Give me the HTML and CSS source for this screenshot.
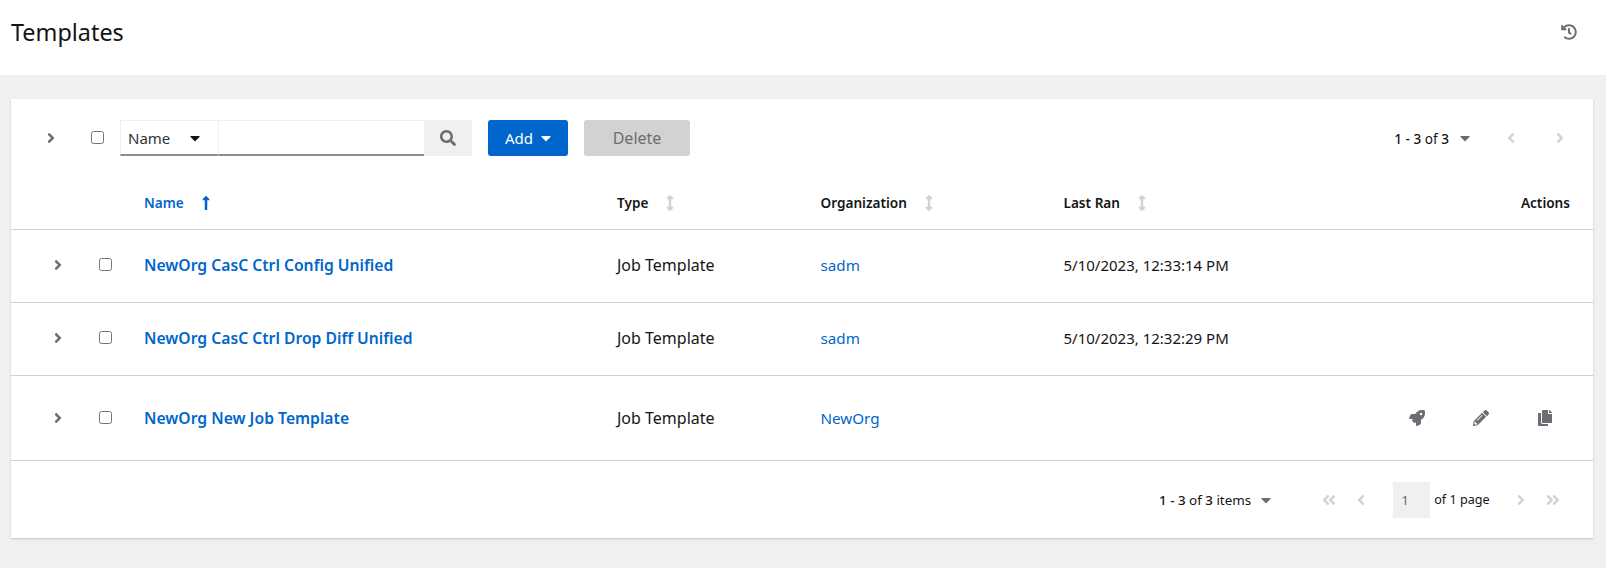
FILE: index.html
```html
<!DOCTYPE html>
<html lang="en">
<head>
  <meta charset="UTF-8" />
  <title>Templates</title>
  <link rel="stylesheet" href="styles.css">
</head>
<body>
  <svg class="sprites" xmlns="http://www.w3.org/2000/svg">
    <symbol id="i-right" viewBox="0 0 256 512"><path d="M224.3 273l-136 136c-9.4 9.4-24.6 9.4-33.9 0l-22.6-22.6c-9.4-9.4-9.4-24.6 0-33.9l96.4-96.4-96.4-96.4c-9.4-9.4-9.4-24.6 0-33.9L54.3 103c9.4-9.4 24.6-9.4 33.9 0l136 136c9.5 9.4 9.5 24.6.1 34z"/></symbol>
    <symbol id="i-left" viewBox="0 0 256 512"><path d="M31.7 239l136-136c9.4-9.4 24.6-9.4 33.9 0l22.6 22.6c9.4 9.4 9.4 24.6 0 33.9L127.9 256l96.4 96.4c9.4 9.4 9.4 24.6 0 33.9L201.7 409c-9.4 9.4-24.6 9.4-33.9 0l-136-136c-9.5-9.4-9.5-24.6-.1-34z"/></symbol>
    <symbol id="i-first" viewBox="0 0 448 512"><path d="M223.7 239l136-136c9.4-9.4 24.6-9.4 33.9 0l22.6 22.6c9.4 9.4 9.4 24.6 0 33.9L319.9 256l96.4 96.4c9.4 9.4 9.4 24.6 0 33.9L393.7 409c-9.4 9.4-24.6 9.4-33.9 0l-136-136c-9.5-9.4-9.5-24.6-.1-34zm-192 34l136 136c9.4 9.4 24.6 9.4 33.9 0l22.6-22.6c9.4-9.4 9.4-24.6 0-33.9L127.9 256l96.4-96.4c9.4-9.4 9.4-24.6 0-33.9L201.7 103c-9.4-9.4-24.6-9.4-33.9 0l-136 136c-9.5 9.4-9.5 24.6-.1 34z"/></symbol>
    <symbol id="i-last" viewBox="0 0 448 512"><path d="M224.3 273l-136 136c-9.4 9.4-24.6 9.4-33.9 0l-22.6-22.6c-9.4-9.4-9.4-24.6 0-33.9l96.4-96.4-96.4-96.4c-9.4-9.4-9.4-24.6 0-33.9L54.3 103c9.4-9.4 24.6-9.4 33.9 0l136 136c9.5 9.4 9.5 24.6.1 34zm192-34l-136-136c-9.4-9.4-24.6-9.4-33.9 0l-22.6 22.6c-9.4 9.4-9.4 24.6 0 33.9l96.4 96.4-96.4 96.4c-9.4 9.4-9.4 24.6 0 33.9l22.6 22.6c9.4 9.4 24.6 9.4 33.9 0l136-136c9.4-9.2 9.4-24.4 0-33.8z"/></symbol>
    <symbol id="i-caret" viewBox="0 0 320 512"><path d="M31.3 192h257.3c17.8 0 26.7 21.5 14.1 34.1L174.1 354.8c-7.8 7.8-20.5 7.8-28.3 0L17.2 226.1C4.6 213.5 13.5 192 31.3 192z"/></symbol>
    <symbol id="i-sort" viewBox="0 0 256 512"><path d="M214.059 377.941H168V134.059h46.059c21.382 0 32.09-25.851 16.971-40.971L144.971 7.029c-9.373-9.373-24.569-9.373-33.941 0L24.971 93.088c-15.119 15.119-4.411 40.971 16.971 40.971H88v243.882H41.941c-21.382 0-32.09 25.851-16.971 40.971l86.059 86.059c9.373 9.373 24.569 9.373 33.941 0l86.059-86.059c15.12-15.119 4.412-40.971-16.97-40.971z"/></symbol>
    <symbol id="i-up" viewBox="0 0 256 512"><path d="M88 166.059V468c0 6.627 5.373 12 12 12h56c6.627 0 12-5.373 12-12V166.059h46.059c21.382 0 32.09-25.851 16.971-40.971l-86.059-86.059c-9.373-9.373-24.569-9.373-33.941 0l-86.059 86.059c-15.119 15.119-4.411 40.971 16.971 40.971H88z"/></symbol>
  </svg>

  <header class="page-header">
    <h1>Templates</h1>
    <svg class="history-icon" viewBox="0 0 512 512"><path d="M504 255.531c.253 136.64-111.18 248.372-247.82 248.468-59.015.042-113.223-20.53-155.822-54.911-11.077-8.94-11.905-25.541-1.839-35.607l11.267-11.267c8.609-8.609 22.353-9.551 31.891-1.984C173.062 425.135 212.781 440 256 440c101.705 0 184-82.311 184-184 0-101.705-82.311-184-184-184-48.814 0-93.149 18.969-126.068 49.932l50.754 50.754c10.08 10.08 2.941 27.314-11.313 27.314H24c-8.837 0-16-7.163-16-16V38.627c0-14.254 17.234-21.393 27.314-11.314l49.372 49.372C129.209 34.136 189.552 8 256 8c136.81 0 247.747 110.78 248 247.531zm-180.912 78.784l9.823-12.63c8.138-10.463 6.253-25.542-4.21-33.679L288 256.349V152c0-13.255-10.745-24-24-24h-16c-13.255 0-24 10.745-24 24v135.651l65.409 50.874c10.463 8.137 25.541 6.253 33.679-4.21z"/></svg>
  </header>

  <main class="card">
    <div class="toolbar">
      <svg class="chevron toolbar-chevron"><use href="#i-right"/></svg>
      <span class="check toolbar-check"></span>
      <div class="filter">
        <div class="filter-select">Name<svg class="caret dark"><use href="#i-caret"/></svg></div>
        <div class="filter-input"></div>
        <div class="filter-btn"><svg viewBox="0 0 512 512"><path d="M505 442.7L405.3 343c-4.5-4.5-10.6-7-17-7H372c27.6-35.3 44-79.7 44-128C416 93.1 322.9 0 208 0S0 93.1 0 208s93.1 208 208 208c48.3 0 92.7-16.4 128-44v16.3c0 6.4 2.5 12.5 7 17l99.7 99.7c9.4 9.4 24.6 9.4 33.9 0l28.3-28.3c9.4-9.4 9.4-24.6.1-34zM208 336c-70.7 0-128-57.2-128-128 0-70.7 57.2-128 128-128 70.7 0 128 57.2 128 128 0 70.7-57.2 128-128 128z"/></svg></div>
      </div>
      <button class="btn btn-add">Add<svg class="caret white"><use href="#i-caret"/></svg></button>
      <button class="btn btn-delete">Delete</button>
      <div class="top-pager">
        <span class="count"><b>1 - 3</b> of <b>3</b></span>
        <svg class="caret grey"><use href="#i-caret"/></svg>
        <svg class="chevron off pager-prev"><use href="#i-left"/></svg>
        <svg class="chevron off pager-next"><use href="#i-right"/></svg>
      </div>
    </div>

    <table class="list">
      <thead>
        <tr>
          <th class="col-expand"></th>
          <th class="col-check"></th>
          <th class="col-name sorted">Name<svg class="sort-icon up"><use href="#i-up"/></svg></th>
          <th class="col-type">Type<svg class="sort-icon"><use href="#i-sort"/></svg></th>
          <th class="col-org">Organization<svg class="sort-icon"><use href="#i-sort"/></svg></th>
          <th class="col-ran">Last Ran<svg class="sort-icon"><use href="#i-sort"/></svg></th>
          <th class="col-actions">Actions</th>
        </tr>
      </thead>
      <tbody>
        <tr>
          <td class="col-expand"><svg class="chevron"><use href="#i-right"/></svg></td>
          <td class="col-check"><span class="check"></span></td>
          <td><a class="name-link">NewOrg CasC Ctrl Config Unified</a></td>
          <td>Job Template</td>
          <td><a class="org-link">sadm</a></td>
          <td class="ran">5/10/2023, 12:33:14 PM</td>
          <td></td>
        </tr>
        <tr>
          <td class="col-expand"><svg class="chevron"><use href="#i-right"/></svg></td>
          <td class="col-check"><span class="check"></span></td>
          <td><a class="name-link">NewOrg CasC Ctrl Drop Diff Unified</a></td>
          <td>Job Template</td>
          <td><a class="org-link">sadm</a></td>
          <td class="ran">5/10/2023, 12:32:29 PM</td>
          <td></td>
        </tr>
        <tr class="tall">
          <td class="col-expand"><svg class="chevron"><use href="#i-right"/></svg></td>
          <td class="col-check"><span class="check"></span></td>
          <td><a class="name-link">NewOrg New Job Template</a></td>
          <td>Job Template</td>
          <td><a class="org-link">NewOrg</a></td>
          <td colspan="2">
            <div class="actions">
              <svg viewBox="0 0 512 512"><path d="M505.12 19.09c-1.19-5.53-6.66-11-12.21-12.18C460.72 0 435.51 0 410.41 0 307.18 0 245.27 55.2 199.05 128H94.84c-16.35.02-35.56 11.88-42.89 26.48L2.52 253.3A28.4 28.4 0 0 0 0 264a24 24 0 0 0 24 24h103.82l-22.48 22.47c-11.36 11.36-13 32.26 0 45.25l50.91 50.91c11.16 11.19 32.16 13.16 45.28 0l22.47-22.47V488a24 24 0 0 0 24 24 28.56 28.56 0 0 0 10.71-2.52l98.73-49.39c14.63-7.3 26.51-26.5 26.51-42.86V312.8c72.6-46.31 128.03-108.41 128.03-211.1.01-25.2.01-50.4-6.95-82.61zM384.04 168a40 40 0 1 1 40.01-40 40 40 0 0 1-40.01 40z"/></svg>
              <svg viewBox="0 0 512 512"><path d="M497.9 142.1l-46.1 46.1c-4.7 4.7-12.3 4.7-17 0l-111-111c-4.7-4.7-4.7-12.3 0-17l46.1-46.1c18.7-18.7 49.1-18.7 67.9 0l60.1 60.1c18.8 18.7 18.8 49.1 0 67.9zM284.2 99.8L21.6 362.4.4 483.9c-2.9 16.4 11.4 30.6 27.8 27.8l121.5-21.3 262.6-262.6c4.7-4.7 4.7-12.3 0-17l-111-111c-4.8-4.7-12.4-4.7-17.1 0zM124.1 339.9c-5.5-5.5-5.5-14.3 0-19.8l154-154c5.5-5.5 14.3-5.5 19.8 0s5.5 14.3 0 19.8l-154 154c-5.5 5.5-14.3 5.5-19.8 0zM88 424h48v36.3l-64.5 11.3-31.1-31.1L51.7 376H88v48z"/></svg>
              <svg viewBox="0 0 448 512"><path d="M320 448v40c0 13.255-10.745 24-24 24H24c-13.255 0-24-10.745-24-24V120c0-13.255 10.745-24 24-24h72v296c0 30.879 25.121 56 56 56h168zm0-344V0H152c-13.255 0-24 10.745-24 24v368c0 13.255 10.745 24 24 24h272c13.255 0 24-10.745 24-24V128H344c-13.2 0-24-10.8-24-24zm120.971-31.029L375.029 7.029A24 24 0 0 0 358.059 0H352v96h96v-6.059a24 24 0 0 0-7.029-16.97z"/></svg>
            </div>
          </td>
        </tr>
      </tbody>
    </table>

    <div class="bottom-pager">
      <span class="count"><b>1 - 3</b> of <b>3</b> items</span>
      <svg class="caret grey"><use href="#i-caret"/></svg>
      <div class="page-nav">
        <svg class="chevron off wide"><use href="#i-first"/></svg>
        <svg class="chevron off"><use href="#i-left"/></svg>
        <span class="page-box">1</span>
        <span class="page-of">of 1 page</span>
        <svg class="chevron off"><use href="#i-right"/></svg>
        <svg class="chevron off wide"><use href="#i-last"/></svg>
      </div>
    </div>
  </main>
</body>
</html>
```

FILE: styles.css
```css
* { margin: 0; padding: 0; box-sizing: border-box; }
body {
  font-family: "Noto Sans", "Liberation Sans", sans-serif;
  font-size: 16px; color: #151515; background: #f0f0f0;
  height: 568px; overflow: hidden;
}
.sprites { display: none; }
svg { fill: currentColor; display: block; }

.page-header {
  height: 75px; background: #fff; padding: 0 29px 12px 11px;
  display: flex; align-items: center; justify-content: space-between;
}
.page-header h1 { font-size: 23.4px; font-weight: 400; }
.history-icon { width: 16px; height: 16px; color: #6a6e73; }

.card {
  margin: 24px 13px 0 11px; height: 439px; padding-top: 21px; background: #fff;
  box-shadow: 0 1px 2px rgba(3, 3, 3, 0.2);
}

.chevron { width: 10px; height: 16px; color: #6a6e73; flex: none; }
.chevron.off { color: #d2d2d2; }
.chevron.wide { width: 16px; }
.caret { width: 10px; height: 16px; flex: none; }
.caret.dark { color: #151515; }
.caret.white { color: #fff; }
.caret.grey { color: #6a6e73; }
.check {
  display: block; width: 13px; height: 13px; background: #fff;
  border: 1px solid #767676; border-radius: 2.5px;
}

.toolbar { display: flex; align-items: center; height: 36px; padding-left: 35px; }
.toolbar-chevron { margin-right: 35px; }
.toolbar-check { margin-right: 16px; margin-top: -2px; }
.filter { display: flex; height: 36px; margin-right: 16px; }
.filter-select {
  width: 99px; display: flex; align-items: center; padding: 0 18px 0 7px;
  justify-content: space-between; font-size: 15px;
  border: 1px solid #f0f0f0; border-bottom: 2px solid #8a8d90; color: #333;
}
.filter-input {
  width: 205px; border-top: 1px solid #f0f0f0; border-bottom: 2px solid #8a8d90;
}
.filter-btn {
  width: 48px; background: #f0f0f0; color: #6a6e73;
  display: flex; align-items: center; justify-content: center;
}
.filter-btn svg { width: 16px; height: 16px; }
.btn {
  height: 36px; border: none; border-radius: 3px; font: inherit;
  display: flex; align-items: center; justify-content: center;
}
.btn-add { width: 80px; background: #06c; color: #fff; gap: 8px; margin-right: 16px; font-size: 15px; }
.btn-delete { width: 106px; background: #d2d2d2; color: #6a6e73; }

.top-pager { display: flex; align-items: center; margin-left: auto; padding-right: 28px; font-size: 13.6px; }
.top-pager .caret { margin-left: 11px; }
.pager-prev { margin-left: 36px; }
.pager-next { margin-left: 39px; }
.count b { font-weight: 500; }

.list { width: 100%; border-collapse: collapse; table-layout: fixed; }
.list th, .list td { text-align: left; vertical-align: middle; border-bottom: 1px solid #d2d2d2; }
.list th { height: 73px; padding-top: 20px; font-size: 13.6px; font-weight: 600; }
.list th svg { display: inline-block; vertical-align: -3px; }
.list td { height: 73px; padding-bottom: 2px; }
.list tr.tall td { height: 85px; padding-bottom: 0; }
.list .col-expand { width: 88px; padding-left: 42px; }
.col-check { width: 45px; }
.col-name { width: 473px; }
.col-type { width: 203.5px; }
.col-org { width: 243px; }
.col-ran { width: 400px; }
.list th.col-actions { text-align: right; padding-right: 23px; }
.list th.sorted { color: #06c; }
.sort-icon { width: 10px; height: 16px; margin-left: 17px; color: #d2d2d2; }
.sort-icon.up { color: #06c; }
.name-link { color: #06c; font-weight: 600; font-size: 15.7px; }
.org-link { color: #06c; font-size: 15.2px; }
.ran { font-size: 15px; }

.actions { display: flex; justify-content: flex-end; gap: 48px; padding-right: 40px; color: #6a6e73; }
.actions svg { width: 16px; height: 16px; flex: none; }

.bottom-pager {
  display: flex; align-items: center; height: 78px; padding-left: 1148px;
  font-size: 13.4px;
}
.bottom-pager .caret { margin-left: 10px; }
.page-nav { display: flex; align-items: center; margin-left: 50px; }
.page-box {
  width: 37px; height: 36px; background: #f0f0f0; color: #6a6e73;
  display: flex; align-items: center; padding-left: 8px; margin: 0 4px 0 27px;
}
.page-of { font-size: 12.6px; margin-right: 26px; }
.page-nav .chevron.off + .chevron.off { margin-left: 19px; }
```
